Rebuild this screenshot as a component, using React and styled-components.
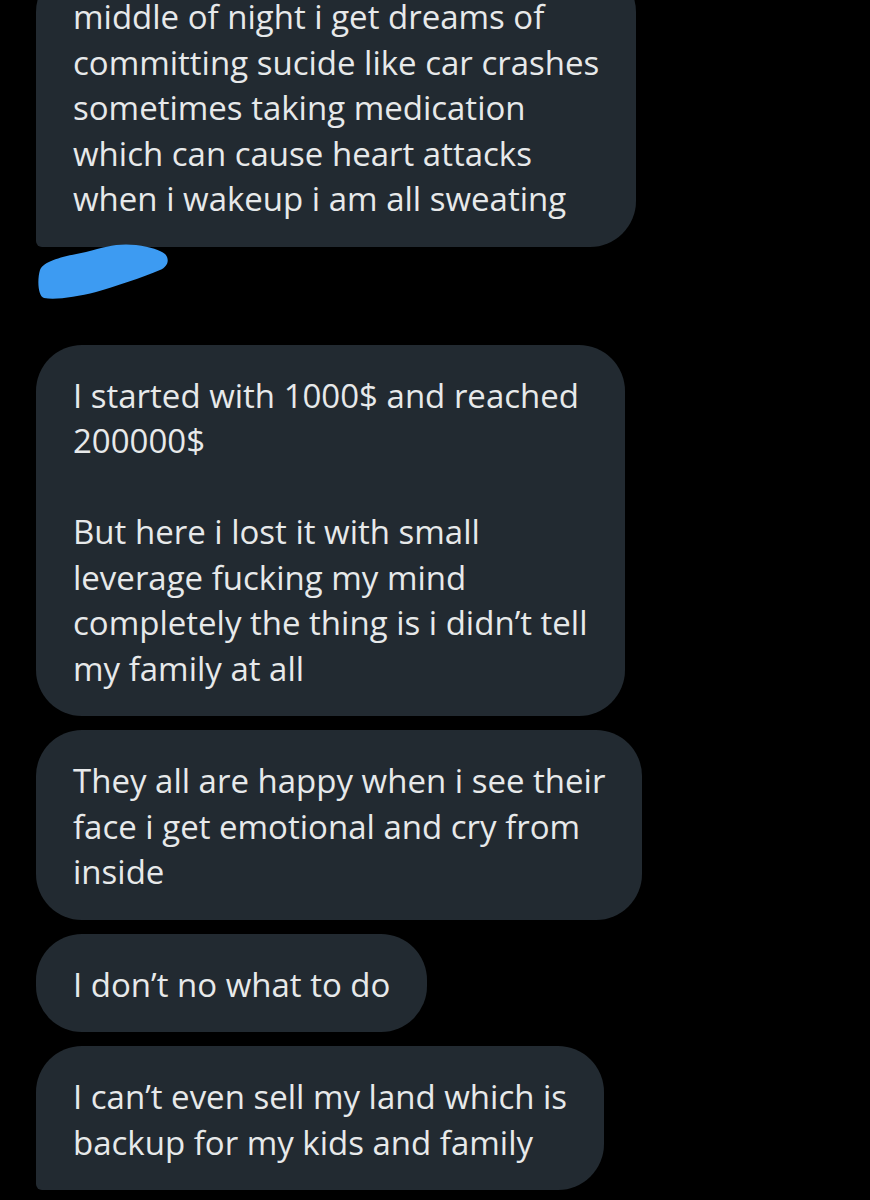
import styled, { createGlobalStyle } from 'styled-components';

const GlobalStyle = createGlobalStyle`
  html, body {
    margin: 0;
    padding: 0;
    background: #000;
  }
  body {
    font-family: 'Open Sans', 'Noto Sans', sans-serif;
    -webkit-font-smoothing: antialiased;
  }
`;

const Screen = styled.div`
  width: 870px;
  height: 1200px;
  overflow: hidden;
  background: #000;
`;

const Thread = styled.div`
  display: flex;
  flex-direction: column;
  align-items: flex-start;
  gap: 14px;
  padding: 0 36px;
  margin-top: -34px;
`;

const Bubble = styled.div`
  background: #222a31;
  color: #e7e9ea;
  font-size: 33px;
  line-height: 45.5px;
  padding: 28px 37px 25px;
  white-space: nowrap;
  border-radius: ${(p) => (p.$last ? '46px 46px 46px 6px' : '46px')};
`;

const Meta = styled.div`
  height: 91px;
  margin-top: -21px;
  display: flex;
  align-items: flex-start;
`;

const Scribble = () => (
  <svg width="136" height="62" viewBox="0 0 136 62">
    <path
      d="M4 30 C 8 20 30 16 50 12 C 70 7 80 3 100 5 C 115 7 124 10 129 14
         C 134 19 132 27 124 30 C 105 38 80 46 60 52 C 40 57 20 60 8 58
         C 2 56 1 40 4 30 Z"
      fill="#3d9bf2"
    />
  </svg>
);

const messages = [
  {
    lines: [
      'middle of night i get dreams of',
      'committing sucide like car crashes',
      'sometimes taking medication',
      'which can cause heart attacks',
      'when i wakeup i am all sweating',
    ],
    last: true,
    meta: true,
  },
  {
    lines: [
      'I started with 1000$ and reached',
      '200000$',
      '',
      'But here i lost it with small',
      'leverage fucking my mind',
      'completely the thing is i didn\u2019t tell',
      'my family at all',
    ],
  },
  {
    lines: [
      'They all are happy when i see their',
      'face i get emotional and cry from',
      'inside',
    ],
  },
  { lines: ['I don\u2019t no what to do'] },
  {
    lines: ['I can\u2019t even sell my land which is', 'backup for my kids and family'],
    last: true,
  },
];

export default function App() {
  return (
    <Screen>
      <GlobalStyle />
      <Thread>
        {messages.map((m, i) => (
          <>
            <Bubble key={i} $last={m.last}>
              {m.lines.map((l, j) => (
                <div key={j}>{l || '\u00a0'}</div>
              ))}
            </Bubble>
            {m.meta && (
              <Meta>
                <Scribble />
              </Meta>
            )}
          </>
        ))}
      </Thread>
    </Screen>
  );
}
